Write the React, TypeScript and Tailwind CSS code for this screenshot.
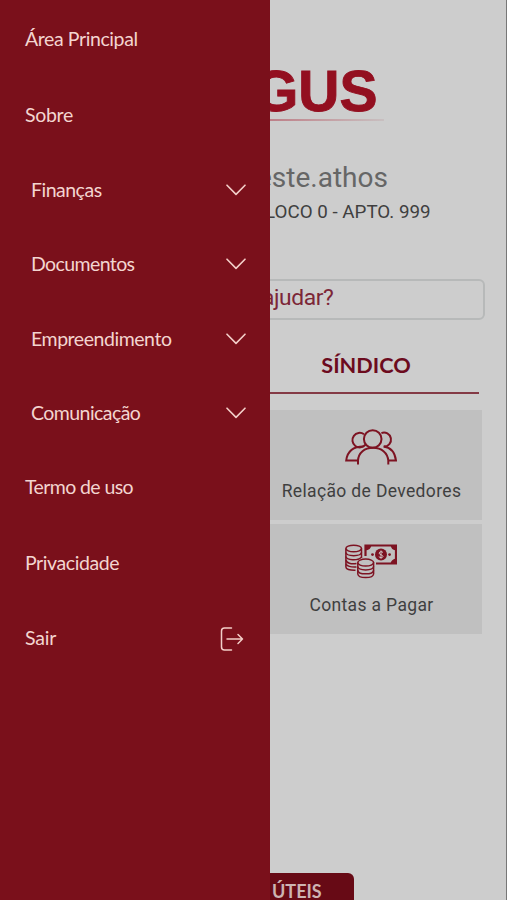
import type { ReactNode } from "react";

interface MenuItem {
  label: string;
  kind: "link" | "group" | "logout";
  className: string;
  textClassName: string;
}

const menuItems: MenuItem[] = [
  { label: "Área Principal", kind: "link", className: "h-[76px] pl-[25px]", textClassName: "tracking-[-0.4px]" },
  { label: "Sobre", kind: "link", className: "h-[76px] pl-[25px]", textClassName: "tracking-[-0.3px]" },
  { label: "Finanças", kind: "group", className: "h-[74.3px] pl-[31px]", textClassName: "tracking-[-0.5px] pb-[2px]" },
  { label: "Documentos", kind: "group", className: "h-[74.3px] pl-[31px]", textClassName: "tracking-[-0.6px] pb-[2px]" },
  { label: "Empreendimento", kind: "group", className: "h-[74.3px] pl-[31px]", textClassName: "tracking-[-0.45px] pb-px" },
  { label: "Comunicação", kind: "group", className: "h-[74.3px] pl-[31px]", textClassName: "tracking-[-0.55px]" },
  { label: "Termo de uso", kind: "link", className: "h-[75.5px] pl-[25px]", textClassName: "tracking-[-0.6px] pb-[2px]" },
  { label: "Privacidade", kind: "link", className: "h-[75.5px] pl-[25px]", textClassName: "tracking-[-0.4px] pb-[2px]" },
  { label: "Sair", kind: "logout", className: "h-[75.5px] pl-[25px]", textClassName: "tracking-[-0.2px] pb-[2px]" },
];

function ChevronIcon() {
  return (
    <svg width="20" height="12" viewBox="0 0 20 12" fill="none" stroke="#f3cfc9" strokeWidth="1.6" strokeLinecap="round" strokeLinejoin="round">
      <path d="M1 1.2 10 10.4 19 1.2" />
    </svg>
  );
}

function LogoutIcon() {
  return (
    <svg width="24" height="24" viewBox="0 0 24 24" fill="none" stroke="#f3cfc9" strokeWidth="1.5" strokeLinecap="round" strokeLinejoin="round">
      <path d="M11.5 1H4.5Q1.5 1 1.5 4V20Q1.5 23 4.5 23H11.5" />
      <path d="M7 12H22.5M18 7.5 22.5 12 18 16.5" />
    </svg>
  );
}

function PeopleIcon() {
  return (
    <svg width="52" height="36" viewBox="0 0 52 36" fill="none" stroke="#7d1322" strokeWidth="2">
      <circle cx="27.7" cy="10" r="8.8" />
      <path d="M19 5.2A7.3 7.3 0 1 0 20.5 15.6" />
      <path d="M36.4 4.1A7 7 0 1 1 39 17.6" />
      <path d="M18.5 17.6C9 17.6 2.4 22 1.2 31.6H13" />
      <path d="M13 35.4V31.5C13.5 23.5 19.5 18.8 28 18.8S42.5 23.5 43.3 31.5V35.4" />
      <path d="M38.5 17.6C45.5 18.6 50 23.5 51 31.6H43.3" />
    </svg>
  );
}

function MoneyIcon() {
  return (
    <svg width="52" height="35" viewBox="0 0 52 35" fill="none" stroke="#7d1322" strokeWidth="1.5">
      <ellipse cx="8.7" cy="4.5" rx="7.8" ry="3.3" />
      <path d="M.9 4.5V23C.9 25.2 4.5 26.5 10.5 26.3M16.5 4.5V14" />
      <path d="M.9 8.5C1.5 12.7 15.9 12.7 16.5 8.5M.9 12.5C1.5 16.5 13 16.8 16 13.5M.9 16C1.5 19 6 20.5 11.5 19.5M.9 19.7C1.5 22 6 23.5 11.5 23" />
      <ellipse cx="20.7" cy="18.6" rx="7.9" ry="3.5" />
      <path d="M12.8 18.6V30C13.3 34.7 28 34.7 28.6 30V18.6" />
      <path d="M12.8 22.5C13.3 27 28 27 28.6 22.5M12.8 26.3C13.3 31 28 31 28.6 26.3" />
      <path d="M20.5 12V1.5H51V19.5H31" strokeWidth="2.2" />
      <path d="M20 1H26.5Q26 6 20 6.5ZM51.5 1V6.5Q46 6 45.5 1ZM51.5 20H45.5Q46 15 51.5 14.5Z" fill="#7d1322" stroke="none" />
      <circle cx="36" cy="10.6" r="6" fill="#7d1322" stroke="none" />
      <circle cx="27.5" cy="10.6" r="1.4" fill="#7d1322" stroke="none" />
      <circle cx="44.6" cy="10.6" r="1.4" fill="#7d1322" stroke="none" />
      <path d="M38 8.5C37 7.2 34.2 7.5 34.2 9.2S38 10.8 38 12.4 34.8 14 33.8 12.6M36 6.5V14.8" stroke="#d0c2c3" strokeWidth="1" />
    </svg>
  );
}

function SideMenu() {
  return (
    <aside className="h-full w-[270px] shrink-0 bg-[#7a101b] pt-px">
      <nav>
        {menuItems.map((item) => (
          <button
            key={item.label}
            type="button"
            className={`flex w-full items-center justify-between pr-[24px] text-left font-['Lato'] text-[19.5px] text-[#f3d5d0] ${item.className}`}
          >
            <span className={`whitespace-nowrap ${item.textClassName}`}>{item.label}</span>
            {item.kind === "group" && <ChevronIcon />}
            {item.kind === "logout" && (
              <span className="mr-0.5">
                <LogoutIcon />
              </span>
            )}
          </button>
        ))}
      </nav>
    </aside>
  );
}

function Tile({ icon, label }: { icon: ReactNode; label: string }) {
  return (
    <button
      type="button"
      className="flex h-[110px] w-[212px] flex-col items-center bg-[#c0c0c0] pr-[9px] text-[#3f3f3f]"
    >
      <span className="flex h-[67px] items-end pt-4 pr-px pb-3">{icon}</span>
      <span className="mt-[2px] whitespace-nowrap font-['Roboto'] text-[17.5px] leading-6 tracking-[0.35px]">{label}</span>
    </button>
  );
}

export default function App() {
  return (
    <div className="flex h-[900px] w-[507px] overflow-hidden bg-[#cdcdcd]">
      <SideMenu />
      <main className="flex h-full min-w-0 flex-1 flex-col overflow-hidden border-r border-[#777777]">
        <div className="h-[119px] shrink-0 pt-[59px]">
          <span className="-ml-[16px] block font-['Liberation_Sans'] text-[57px] leading-[64px] font-bold text-[#930f20] [-webkit-text-stroke:0.9px_#930f20]">
            GUS
          </span>
        </div>
        <div className="h-[2px] w-[114px] shrink-0 bg-linear-to-r from-[#bd7f88] to-[#c8bfc0]" />

        <div className="mt-[40px] -ml-[13px] h-[34px] shrink-0 font-['Roboto'] text-[28px] leading-[34px] text-[#666666]">
          este.athos
        </div>
        <div className="mt-[5px] -ml-[5px] h-6 shrink-0 font-['Roboto'] text-[18.8px] leading-6 whitespace-nowrap text-[#3f3f3f]">
          LOCO 0 - APTO. 999
        </div>

        <div className="mt-[55px] -ml-3 flex h-[41px] w-[227px] shrink-0 items-center rounded-md border-2 border-[#b7b9b9] pb-[3px] pl-[2px] font-['Roboto'] text-[22.8px] tracking-[-0.4px] text-[#7c2637]">
          ajudar?
        </div>

        <div className="mt-[28px] flex h-[46px] w-[209px] shrink-0 justify-center border-b-2 border-[#843a45] pt-[2px] pr-[17px] font-['Lato'] text-[21.7px] leading-[30px] font-bold text-[#6c0b1e]">
          SÍNDICO
        </div>

        <div className="mt-4 flex shrink-0 flex-col gap-1">
          <Tile icon={<PeopleIcon />} label="Relação de Devedores" />
          <Tile icon={<MoneyIcon />} label="Contas a Pagar" />
        </div>

        <div className="mt-auto h-[27px] w-[84px] shrink-0 rounded-tr-md bg-[#670a15] pt-[6px] pl-[2px] font-['Lato'] text-[18px] leading-6 font-bold text-[#cdb4b2]">
          ÚTEIS
        </div>
      </main>
    </div>
  );
}
